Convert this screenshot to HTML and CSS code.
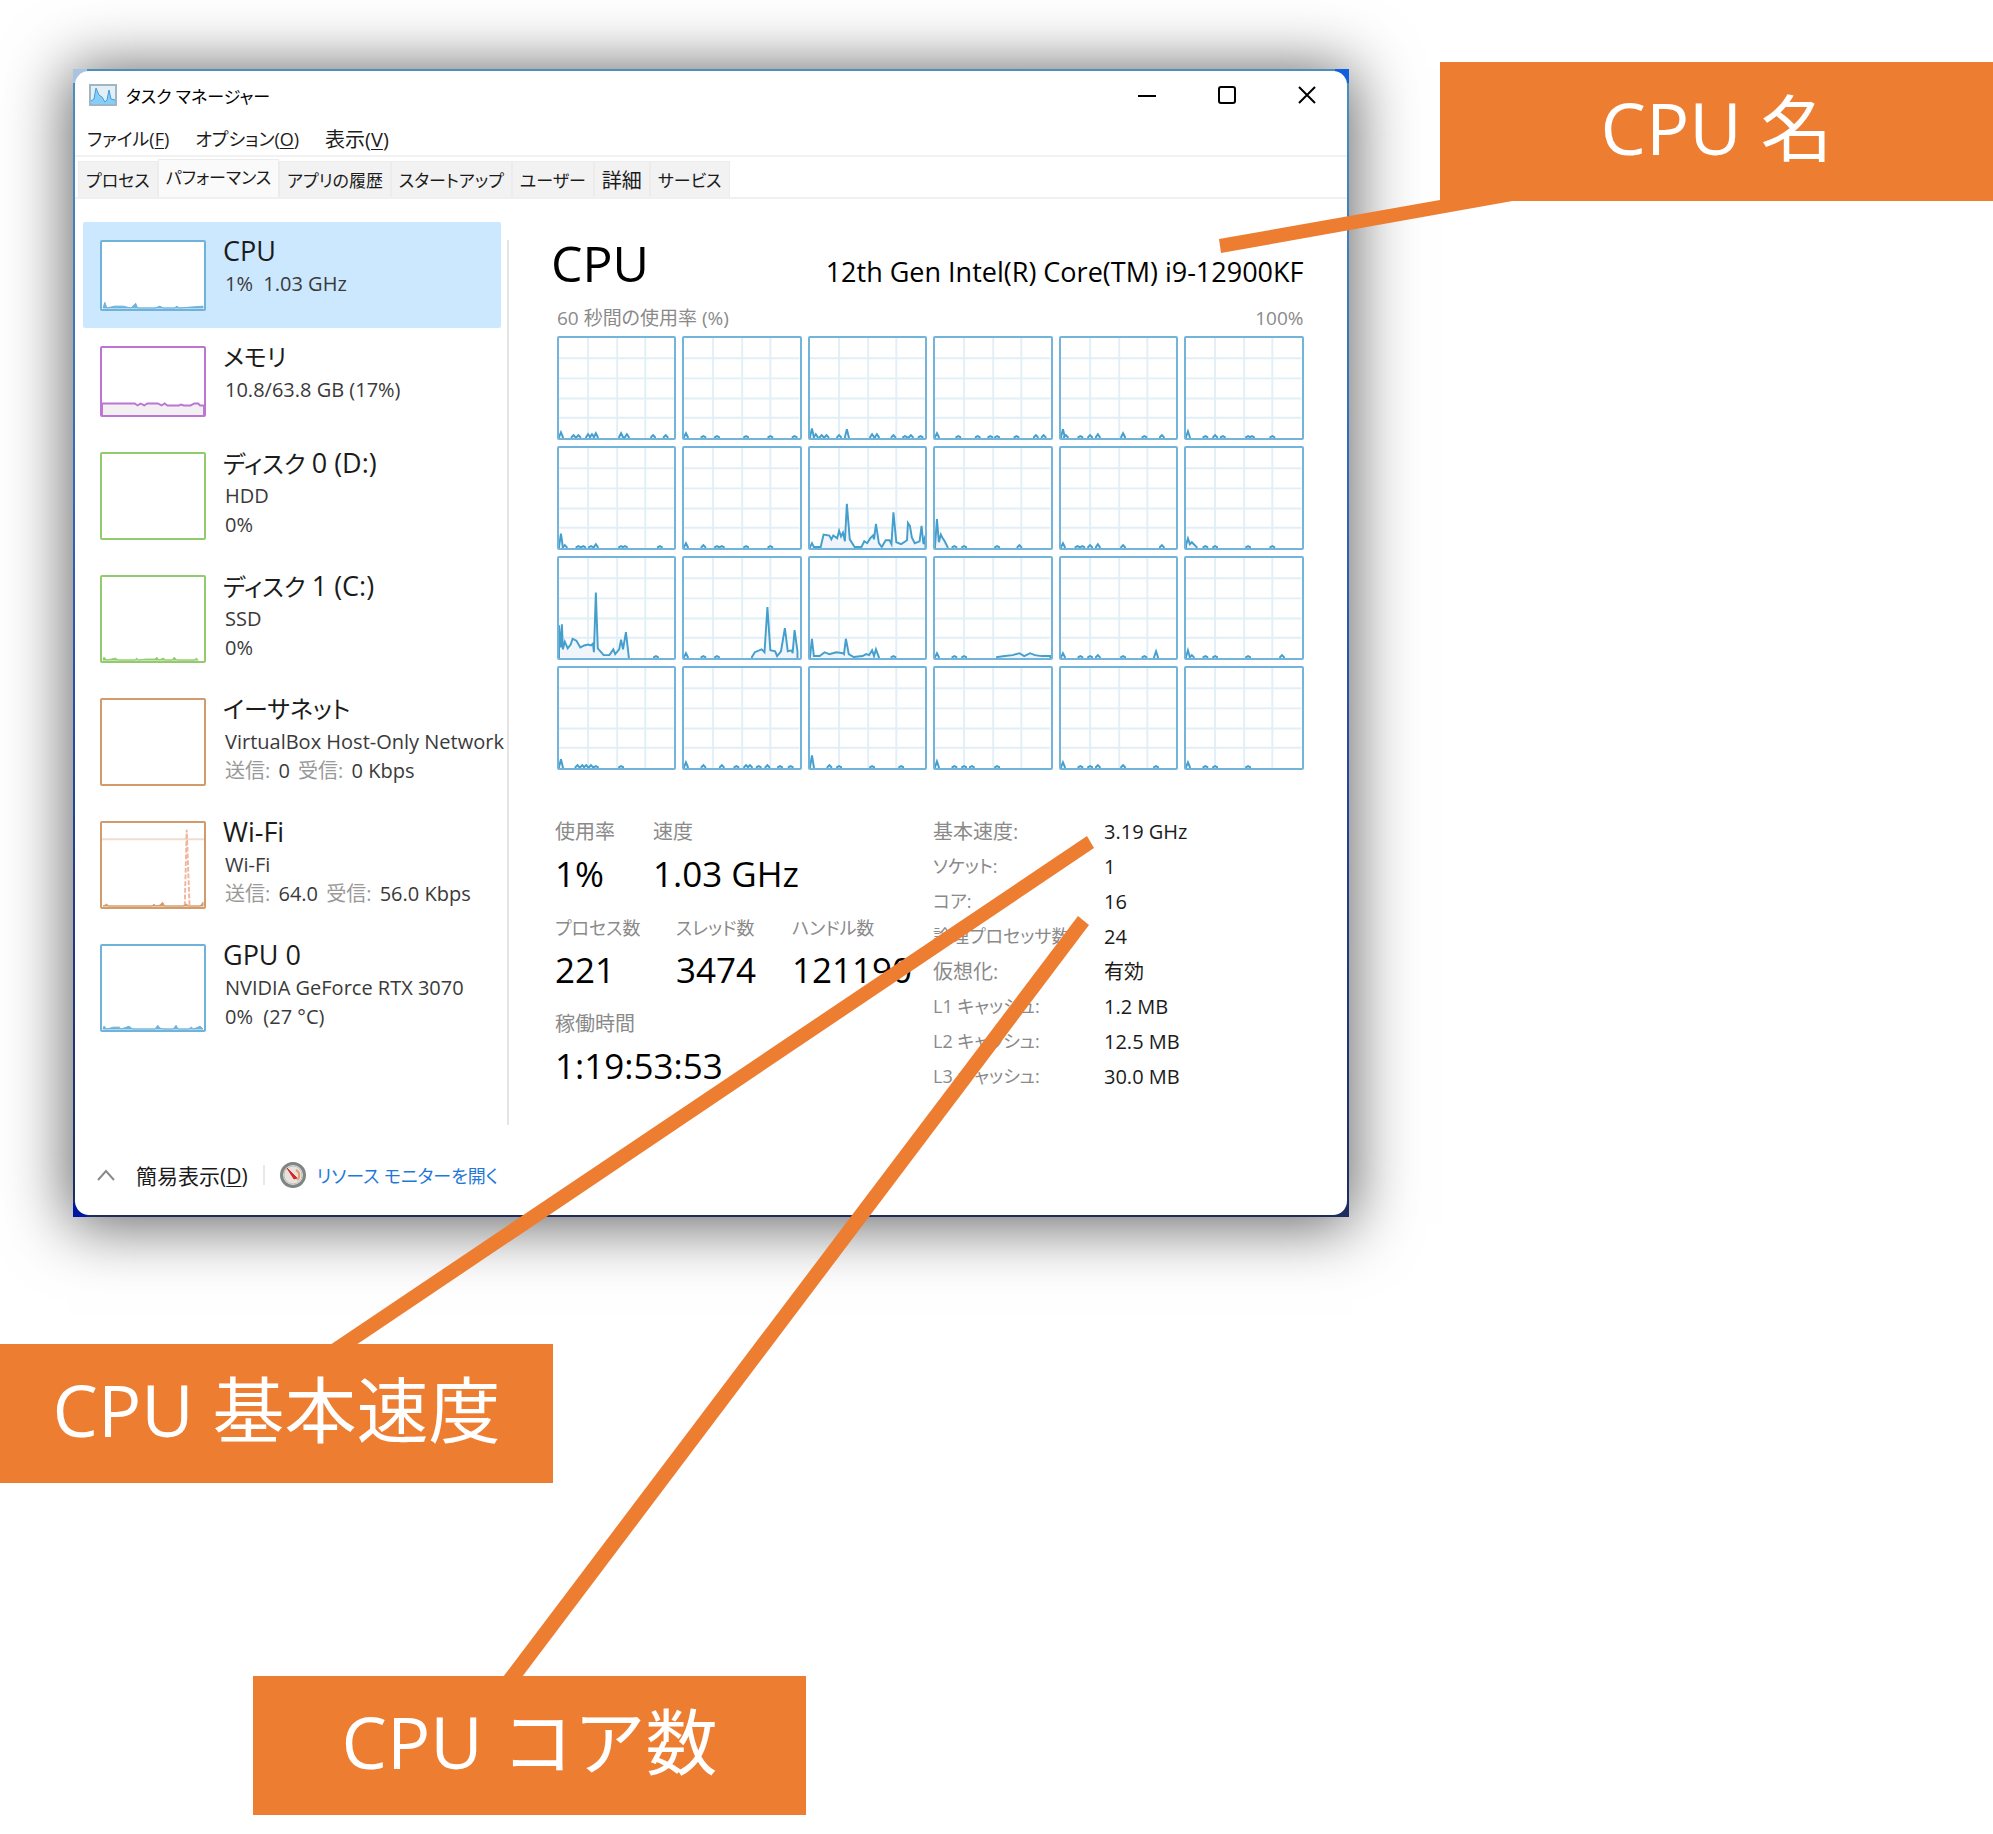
FILE: index.html
```html
<!DOCTYPE html>
<html lang="ja">
<head>
<meta charset="utf-8">
<meta name="viewport" content="width=device-width, initial-scale=1">
<title>タスク マネージャー</title>
<link rel="stylesheet" href="styles.css">
</head>
<body>
<main class="stage">
  <section class="frame" aria-label="タスク マネージャー">
    <div class="window">
      <header class="titlebar">
        <svg class="app-icon" viewBox="0 0 28 22" aria-hidden="true">
          <rect x="1" y="1" width="26" height="20" fill="#e4eef5" stroke="#9fb6c4" stroke-width="2"/>
          <path d="M2 17 L5 15 L7 4 L10 11 L13 13 L16 18 L18 16 L20 6 L22 15 L26 16 V20 H2Z" fill="#86cef8"/>
          <path d="M2 17 L5 15 L7 4 L10 11 L13 13 L16 18 L18 16 L20 6 L22 15 L26 16" fill="none" stroke="#3f9ee0" stroke-width="1"/>
        </svg>
        <h1 class="title">タスク マネージャー</h1>
        <div class="controls">
          <button type="button" aria-label="最小化"><svg viewBox="0 0 20 20"><path d="M1 11H19"/></svg></button>
          <button type="button" aria-label="最大化"><svg viewBox="0 0 20 20"><rect x="2" y="2" width="16" height="16" rx="2"/></svg></button>
          <button type="button" aria-label="閉じる"><svg viewBox="0 0 20 20"><path d="M2 2L18 18M18 2L2 18"/></svg></button>
        </div>
      </header>
      <nav class="menubar">
        <button type="button">ファイル(<u>F</u>)</button>
        <button type="button">オプション(<u>O</u>)</button>
        <button type="button" class="kanji">表示(<u>V</u>)</button>
      </nav>
      <div class="tabs" role="tablist">
        <button type="button" role="tab">プロセス</button>
        <button type="button" role="tab" aria-selected="true">パフォーマンス</button>
        <button type="button" role="tab">アプリの履歴</button>
        <button type="button" role="tab">スタートアップ</button>
        <button type="button" role="tab">ユーザー</button>
        <button type="button" role="tab" class="kanji">詳細</button>
        <button type="button" role="tab">サービス</button>
      </div>
      <div class="content">
        <div class="sidebar">
          <button type="button" class="item selected">
            <svg class="thumb short blue" viewBox="0 0 106 70" preserveAspectRatio="none"><path d="M1 69L3 63L5 69L13 67L22 67L30 69L35 64L37 69H55L60 67L64 69H75L78 67L80 69L92 68L105 67V69Z"/></svg>
            <span class="info"><span class="name">CPU</span><span class="sub">1%&nbsp; 1.03 GHz</span></span>
          </button>
          <button type="button" class="item">
            <svg class="thumb short purple" viewBox="0 0 106 70" preserveAspectRatio="none"><path d="M0 58H34L37 60L40 58L44 60L47 58H58L62 60L65 58L68 60H80L82 59L85 60H92L96 58H100L102 60H106V72H0Z"/></svg>
            <span class="info"><span class="name ja">メモリ</span><span class="sub">10.8/63.8 GB (17%)</span></span>
          </button>
          <button type="button" class="item">
            <svg class="thumb green" viewBox="0 0 106 88"></svg>
            <span class="info"><span class="name ja">ディスク <b>0 (D:)</b></span><span class="sub">HDD</span><span class="sub">0%</span></span>
          </button>
          <button type="button" class="item">
            <svg class="thumb green" viewBox="0 0 106 88" preserveAspectRatio="none"><path d="M1 87L2 84L5 87L14 85L17 87H34L36 85L38 87L45 86H55L57 84L59 87L64 85L66 87H73L75 84L78 87H96L98 85L100 87Z"/></svg>
            <span class="info"><span class="name ja">ディスク <b>1 (C:)</b></span><span class="sub">SSD</span><span class="sub">0%</span></span>
          </button>
          <button type="button" class="item">
            <svg class="thumb brown" viewBox="0 0 106 88"></svg>
            <span class="info"><span class="name ja">イーサネット</span><span class="sub">VirtualBox Host-Only Network</span><span class="sub"><i>送信:</i> 0 <i>受信:</i> 0 Kbps</span></span>
          </button>
          <button type="button" class="item">
            <svg class="thumb brown" viewBox="0 0 106 88" preserveAspectRatio="none">
              <line class="faint" x1="0" y1="17" x2="106" y2="17"/>
              <polyline class="dashed" points="86,87 88,7 91,87"/>
              <path d="M1 87L5 85L7 87H52L54 85L56 87L60 86L63 83L65 87H84L88 85L90 87H102L105 83V87Z"/>
            </svg>
            <span class="info"><span class="name">Wi-Fi</span><span class="sub">Wi-Fi</span><span class="sub"><i>送信:</i> 64.0 <i>受信:</i> 56.0 Kbps</span></span>
          </button>
          <button type="button" class="item">
            <svg class="thumb blue" viewBox="0 0 106 88" preserveAspectRatio="none"><path d="M1 87L2 84L5 87L12 85H18L20 87L28 84L32 87H55L58 83L60 86L64 87H74L77 83L79 87H90L93 85L95 87L102 84L105 87Z"/></svg>
            <span class="info"><span class="name">GPU 0</span><span class="sub">NVIDIA GeForce RTX 3070</span><span class="sub">0%&nbsp; (27 °C)</span></span>
          </button>
        </div>
        <section class="detail">
          <div class="heading"><h2>CPU</h2><p>12th Gen Intel(R) Core(TM) i9-12900KF</p></div>
          <div class="caption"><span>60 秒間の使用率 (%)</span><span>100%</span></div>
          <div class="cores" id="cores"></div>
          <div class="stats">
            <div class="counters">
              <dl class="pair">
                <div><dt class="kanji">使用率</dt><dd>1%</dd></div>
                <div><dt class="kanji">速度</dt><dd>1.03 GHz</dd></div>
              </dl>
              <dl class="triple">
                <div><dt>プロセス数</dt><dd>221</dd></div>
                <div><dt>スレッド数</dt><dd>3474</dd></div>
                <div><dt>ハンドル数</dt><dd>121190</dd></div>
              </dl>
              <dl>
                <div><dt class="kanji">稼働時間</dt><dd>1:19:53:53</dd></div>
              </dl>
            </div>
            <table class="specs">
              <tr><th scope="row" class="kanji">基本速度:</th><td>3.19 GHz</td></tr>
              <tr><th scope="row">ソケット:</th><td>1</td></tr>
              <tr><th scope="row">コア:</th><td>16</td></tr>
              <tr><th scope="row">論理プロセッサ数:</th><td>24</td></tr>
              <tr><th scope="row" class="kanji">仮想化:</th><td>有効</td></tr>
              <tr><th scope="row">L1 キャッシュ:</th><td>1.2 MB</td></tr>
              <tr><th scope="row">L2 キャッシュ:</th><td>12.5 MB</td></tr>
              <tr><th scope="row">L3 キャッシュ:</th><td>30.0 MB</td></tr>
            </table>
          </div>
        </section>
      </div>
      <footer class="footer">
        <button type="button" class="fewer kanji">
          <svg viewBox="0 0 18 12" aria-hidden="true"><path d="M1 11L9 2L17 11" fill="none" stroke="#8a8a8a" stroke-width="2"/></svg>
          <span>簡易表示(<u>D</u>)</span>
        </button>
        <span class="divider"></span>
        <a href="#" class="monitor">
          <svg viewBox="0 0 26 26" aria-hidden="true">
            <circle cx="13" cy="13" r="11.5" fill="#e6e2dc" stroke="#7d8585" stroke-width="3"/>
            <circle cx="13" cy="13" r="9" fill="none" stroke="#c4c0b8" stroke-width="1"/>
            <path d="M16 8A6 6 0 0 1 17 18" fill="none" stroke="#e0a070" stroke-width="2"/>
            <path d="M7 6L17 16L14 17Z" fill="#d8242c" stroke="#d8242c"/>
          </svg>
          <span>リソース モニターを開く</span>
        </a>
      </footer>
    </div>
  </section>
  <svg class="pointers" viewBox="0 0 1993 1834" preserveAspectRatio="none" aria-hidden="true">
    <polygon points="1219,239 1440,200 1518,200 1221,253"/>
    <polygon points="1087,836 1094,848 356,1345 330,1345"/>
    <polygon points="1078,916 1089,925 522,1677 503,1677"/>
  </svg>
  <p class="callout name-note">CPU 名</p>
  <p class="callout speed-note">CPU 基本速度</p>
  <p class="callout core-note">CPU コア数</p>
</main>
<script src="cores.js"></script>
</body>
</html>
```
FILE: styles.css
```css
* { box-sizing: border-box; }

body {
  margin: 0;
  background: #fff;
  color: #1b1b1b;
  font-family: "Open Sans", "Noto Sans CJK JP", sans-serif;
  font-size: 20px;
  font-feature-settings: "palt";
}

h1, h2, p, dl, dd { margin: 0; font-weight: 400; }

button {
  border: 0;
  padding: 0;
  background: none;
  color: inherit;
  font: inherit;
  font-feature-settings: inherit;
  text-align: left;
  white-space: nowrap;
}

u { text-decoration-thickness: 1px; text-underline-offset: 2px; }

.stage {
  position: relative;
  min-height: 100vh;
  padding: 69px 0 0 73px;
}

.frame {
  width: 64vw;
  min-width: 1240px;
  padding: 2px;
  background:
    linear-gradient(#a8c4e0, #a8c4e0) left top / 14px 14px no-repeat,
    linear-gradient(#1060e0, #1060e0) right top / 14px 14px no-repeat,
    linear-gradient(#0018a0, #0018a0) left bottom / 14px 14px no-repeat,
    linear-gradient(#4a90bd, #2f62b8 40%, #203c90 70%, #1c2c60);
  box-shadow: 0 4px 60px 4px rgba(0, 0, 0, .62);
}

.window {
  background: #fff;
  border-radius: 14px;
}

.titlebar {
  display: flex;
  align-items: center;
  height: 48px;
  padding-left: 14px;
}
.app-icon { width: 28px; height: 22px; margin-right: 9px; }
.title { font-size: 17px; color: #000; }
.controls { display: flex; margin-left: auto; }
.controls button { width: 80px; height: 48px; }
.controls svg {
  display: block;
  width: 20px;
  height: 20px;
  margin: 0 auto;
  fill: none;
  stroke: #000;
  stroke-width: 2;
}

.menubar {
  display: flex;
  gap: 26px;
  height: 38px;
  padding: 2px 12px 0;
  border-bottom: 2px solid #f2f2f2;
  font-size: 18px;
}
.menubar .kanji { font-size: 20px; }

.tabs {
  display: flex;
  align-items: flex-end;
  height: 42px;
  padding: 0 3px;
  border-bottom: 2px solid #f0f0f0;
  font-size: 17px;
}
.tabs button {
  height: 36px;
  padding: 0 7px;
  background: #f2f2f2;
  border: 1px solid #ececec;
  border-bottom: 0;
}
.tabs button[aria-selected] {
  height: 38px;
  padding-bottom: 4px;
  background: #fafafa;
}
.tabs .kanji { font-size: 20px; }

.content {
  display: grid;
  grid-template-columns: 434px 1fr;
  padding: 23px 0;
}

.sidebar {
  padding: 0 8px;
  background: linear-gradient(#e5e5e5, #e5e5e5) right bottom / 2px calc(100% - 18px) no-repeat;
  margin-bottom: -23px;
}
.item {
  display: flex;
  width: 100%;
  gap: 17px;
  padding: 18px 0 17px 17px;
}
.selected { background: #cce8ff; border-radius: 2px; }
.thumb {
  flex: none;
  width: 106px;
  height: 88px;
  border: 2px solid;
  border-radius: 2px;
  background: #fff;
}
.thumb.short { height: 71px; }
.thumb path { fill: currentColor; stroke: currentColor; stroke-width: 1; }
.blue { color: #6fb3da; }
.purple { color: #bd75d3; }
.thumb.purple path { fill: #f3f0f4; stroke-width: 2; }
.green { color: #92cb6e; }
.brown { color: #d39b6b; }
.faint { stroke: #f2dccb; stroke-width: 2; }
.dashed { fill: none; stroke: #f0b59a; stroke-width: 2; stroke-dasharray: 5 2; }

.info { display: flex; flex-direction: column; width: 0; }
.name {
  height: 35px;
  margin-top: -6px;
  font-size: 27px;
  line-height: 34px;
}
.name.ja { font-size: 24px; }
.name b { font-size: 27px; font-weight: 400; }
.sub {
  padding-left: 2px;
  line-height: 29px;
  color: #3a3a3a;
  font-size: 20px;
}
.sub i { margin-right: 3px; font-style: normal; color: #999; }
.sub i + i { margin-left: 3px; }

.detail { padding: 0 43px 0 42px; }
.heading {
  display: flex;
  justify-content: space-between;
  align-items: baseline;
  color: #000;
}
.heading h2 { font-size: 50px; line-height: 82px; }
.heading p { font-size: 27px; }
.caption {
  display: flex;
  justify-content: space-between;
  padding: 0 0 3px 6px;
  color: #8a8a8a;
  font-size: 19px;
  line-height: 29px;
}
.cores {
  display: grid;
  grid-template-columns: repeat(6, 1fr);
  gap: 6px;
  padding-left: 6px;
}
.cores svg {
  display: block;
  width: 100%;
  height: 104px;
  border: 2px solid #72b4da;
  border-radius: 2px;
}
.cores .lines { stroke: #e2eff7; stroke-width: 2; fill: none; }
.cores .usage { stroke: #459fcd; stroke-width: 2; fill: #eff5fa; }

.stats {
  display: grid;
  grid-template-columns: 378px 1fr;
  padding: 44px 0 0 4px;
}
.counters dl { display: grid; height: 96px; }
.pair { grid-template-columns: 98px 1fr; }
.triple { grid-template-columns: 121px 116px 1fr; }
.counters dt { color: #8a8a8a; font-size: 18px; line-height: 36px; white-space: nowrap; }
.counters dt.kanji { font-size: 20px; }
.counters dd { color: #000; font-size: 35px; line-height: 48px; }

.specs { border-collapse: collapse; align-self: start; }
.specs th, .specs td {
  height: 35px;
  padding: 0;
  font-weight: 400;
  line-height: 35px;
  text-align: left;
  white-space: nowrap;
}
.specs th { width: 171px; color: #8a8a8a; font-size: 18px; }
.specs th.kanji { font-size: 20px; }
.specs td { font-size: 20px; }

.footer {
  display: flex;
  align-items: center;
  height: 90px;
  padding: 9px 22px 0;
}
.fewer { display: flex; align-items: center; gap: 21px; font-size: 21px; }
.fewer svg { width: 18px; height: 12px; }
.divider { width: 2px; height: 20px; margin: 0 15px; background: #e8e8e8; }
.monitor {
  display: flex;
  align-items: center;
  gap: 11px;
  color: #1f78d8;
  font-size: 18px;
  text-decoration: none;
}
.monitor svg { width: 26px; height: 26px; }

.pointers {
  position: absolute;
  inset: 0;
  width: 100%;
  height: 100%;
  fill: #ed7d31;
  pointer-events: none;
}
.callout {
  position: absolute;
  width: 553px;
  height: 139px;
  background: #ed7d31;
  color: #fff;
  font-size: 72px;
  font-weight: 400;
  line-height: 130px;
  text-align: center;
  font-feature-settings: normal;
}
.name-note { top: 62px; right: 0; }
.speed-note { top: 1344px; left: 0; }
.core-note { top: 1676px; left: 253px; }
```
FILE: cores.js
```js
// Usage history of each logical processor: [position, load] pairs in a 119 x 104 plot.
// "b" lists isolated blips that rise from zero, "t" is a continuous trace.
const history = [
  { b: [[2,5],[15,2],[20,2],[30,3],[34,3],[38,4],[64,4],[70,3],[97,2],[110,2]] },
  { b: [[2,4],[20,1],[34,1],[64,1],[89,1],[114,1]] },
  { b: [[2,9],[6,3],[12,2],[17,2],[30,2],[38,8],[64,3],[69,3],[86,2],[98,1],[104,2],[114,1]] },
  { b: [[2,4],[24,1],[44,1],[57,1],[64,1],[84,1],[104,2],[112,2]] },
  { b: [[2,8],[5,2],[20,1],[30,2],[38,3],[64,4],[86,1],[104,2]] },
  { b: [[2,6],[20,1],[30,2],[38,1],[64,1],[68,1],[89,1]] },

  { b: [[2,14],[6,2],[20,1],[25,1],[33,1],[38,3],[64,1],[68,1],[104,1]] },
  { b: [[2,4],[20,2],[34,1],[39,1],[64,1],[89,1]] },
  { t: [[0,0],[2,4],[4,0],[11,0],[14,13],[20,12],[22,8],[24,12],[28,9],[30,17],[32,11],[34,15],[36,6],[38,45],[41,8],[46,0],[53,0],[56,6],[59,4],[62,9],[65,12],[66,8],[68,24],[71,4],[74,0],[78,7],[82,7],[84,3],[86,36],[89,5],[94,3],[100,7],[101,25],[103,22],[105,10],[108,4],[113,6],[115,22],[117,3],[119,12]] },
  { t: [[0,0],[2,29],[4,5],[6,13],[8,9],[10,6],[13,0]], b: [[20,1],[30,1],[64,1],[87,2]] },
  { b: [[2,4],[17,1],[22,1],[30,2],[38,3],[64,2],[104,2]] },
  { t: [[0,2],[2,9],[4,3],[6,5],[11,0]], b: [[20,1],[30,1],[64,1],[89,1]] },

  { t: [[0,33],[2,10],[3,34],[4,8],[6,16],[9,9],[12,13],[14,19],[18,17],[22,10],[26,12],[30,13],[33,12],[35,14],[36,5],[38,67],[40,9],[46,2],[52,2],[56,8],[58,3],[62,8],[64,18],[66,8],[69,26],[72,0]], b: [[100,1]] },
  { b: [[2,4],[20,1],[34,1]], t: [[70,0],[73,5],[80,8],[83,5],[86,52],[89,7],[94,6],[96,1],[100,6],[104,30],[107,6],[111,7],[112,4],[114,28],[117,6]] },
  { t: [[0,0],[2,19],[4,1],[10,1],[15,5],[20,3],[27,5],[34,4],[35,3],[37,19],[40,3],[45,0],[54,1],[58,3],[61,2],[64,7],[66,1],[68,8],[71,0]], b: [[86,1]] },
  { b: [[2,4],[20,1],[30,1]], t: [[64,0],[72,1],[80,2],[87,4],[92,1],[98,4],[103,2],[110,1],[119,1]] },
  { b: [[2,4],[20,1],[30,1],[38,2],[64,1],[86,1],[98,6]] },
  { b: [[2,7],[6,2],[20,1],[30,1],[64,1],[99,2]] },

  { b: [[2,8],[19,2],[24,2],[28,2],[33,2],[38,1],[64,1]] },
  { b: [[2,5],[20,2],[39,2],[54,1],[64,2],[68,2],[77,1],[86,2],[99,1],[110,1]] },
  { b: [[2,12],[20,2],[30,1],[64,1],[94,1]] },
  { b: [[2,6],[20,1],[30,1],[38,1],[64,1]] },
  { b: [[2,5],[20,1],[30,1],[38,2],[64,2],[98,1]] },
  { b: [[2,5],[20,1],[30,1],[64,1]] }
];

const line = points => {
  const closed = [[points[0][0], -1], ...points, [points[points.length - 1][0], -1]];
  return closed.map(([x, y]) => `${x},${103 - y}`).join(" ");
};

document.getElementById("cores").innerHTML = history.map(({ b = [], t = [] }) => {
  const blips = b.map(([x, y]) => [[x - 2, 0], [x, y], [x + 2, 0]]).concat(t.length ? [t] : []);
  const shapes = blips.map(p => `<polyline class="usage" points="${line(p)}"/>`).join("");
  return `<svg viewBox="0 0 119 104" preserveAspectRatio="none">
    <path class="lines" d="M30 0V104M60 0V104M89 0V104M0 21H119M0 42H119M0 63H119M0 83H119"/>${shapes}</svg>`;
}).join("");
```
